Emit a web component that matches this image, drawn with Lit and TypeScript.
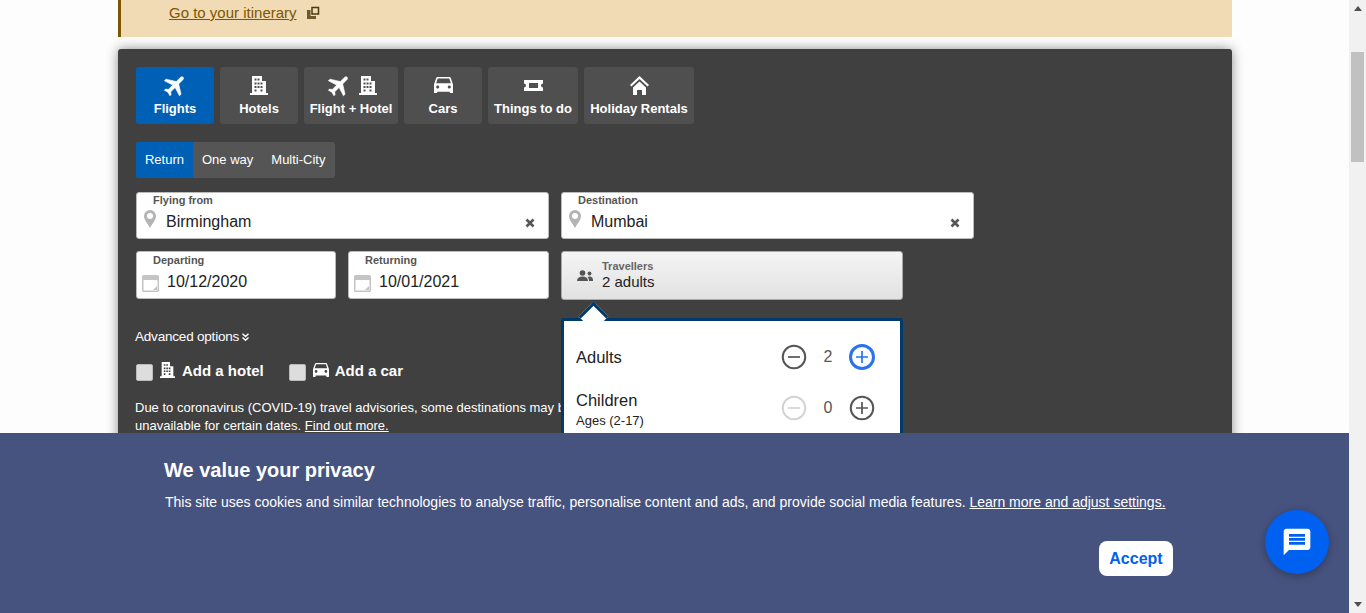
import { LitElement, html, css, svg } from 'lit';
import { customElement } from 'lit/decorators.js';

const plane = (size: number) => html`<svg width=${size} height=${size} viewBox="0 0 24 24" fill="currentColor" stroke="currentColor" stroke-width="0.5"><path transform="rotate(45 12 12)" d="M21 16v-2l-8-5V3.500c0-.83-.67-1.500-1.500-1.500S10 2.670 10 3.500V9l-8 5v2l8-2.500V19l-2 1.500V22l3.500-1 3.500 1v-1.500L13 19v-5.500l8 2.500z"/></svg>`;

const building = (w: number, h: number) => html`<svg width=${w} height=${h} viewBox="0 0 18 19" fill="currentColor"><path fill-rule="evenodd" d="M2 0h10v5h4v12h2v2H0v-2h2zM4.500 2.500v2h2v-2zm3 0v2h2v-2zM4.500 6.500v2h2v-2zm3 0v2h2v-2zm3 0v2h2v-2zM4.500 10v2h2v-2zm3 0v2h2v-2zm3 0v2h2v-2zM4.500 13.500v2h2v-2zm6 0v2h2v-2z"/></svg>`;

const car = (w: number) => html`<svg width=${w} height=${(w * 16) / 18} viewBox="3 5 18 16" fill="currentColor"><path d="M18.920 6.010C18.720 5.420 18.160 5 17.500 5h-11c-.66 0-1.210.42-1.420 1.010L3 12v8c0 .55.45 1 1 1h1c.55 0 1-.45 1-1v-1h12v1c0 .55.45 1 1 1h1c.55 0 1-.45 1-1v-8l-2.080-5.990zM6.500 16c-.83 0-1.500-.67-1.500-1.500S5.670 13 6.500 13s1.500.67 1.500 1.500S7.330 16 6.500 16zm11 0c-.83 0-1.500-.67-1.500-1.500s.67-1.500 1.500-1.500 1.500.67 1.500 1.500-.67 1.500-1.500 1.500zM5 11l1.500-4.500h11L19 11H5z"/></svg>`;

const ticket = html`<svg width="19" height="11" viewBox="0 0 19 11" fill="currentColor"><path fill-rule="evenodd" d="M0 0h19v3.500a2 2 0 0 0 0 4V11H0V7.500a2 2 0 0 0 0-4zM5 3v5h9V3z"/></svg>`;

const house = html`<svg width="19" height="19" viewBox="0 0 19 19" fill="currentColor"><path d="M9.500 0 19 9 17.600 10.500 9.500 3 1.400 10.500 0 9z"/><path d="M9.500 5.500 16 11.500V19H12V14H7V19H3V11.500z"/></svg>`;

const pin = html`<svg width="12" height="18" viewBox="0 0 12 18" fill="#b4b4b4"><path fill-rule="evenodd" d="M6 0a6 6 0 0 1 6 6c0 4-4 8-6 12C4 14 0 10 0 6a6 6 0 0 1 6-6zm0 3a3 3 0 1 0 0 6 3 3 0 0 0 0-6z"/></svg>`;

const clearIcon = html`<svg class="clear" width="10" height="10" viewBox="0 0 10 10"><path d="M1.500 1.500l7 7m0-7l-7 7" stroke="#555" stroke-width="2.600"/></svg>`;

const calendar = html`<svg width="17" height="17" viewBox="0 0 17 17"><rect width="17" height="17" rx="1.500" fill="#c4c4c4"/><rect x="1.500" y="5" width="14" height="10.500" fill="#fff"/><path d="M15 11v4h-4z" fill="#c4c4c4"/></svg>`;

const people = html`<svg width="16" height="11" viewBox="0 0 16 11" fill="#555"><circle cx="5.500" cy="3" r="2.800"/><path d="M0 11c0-3 2-4.500 5.500-4.500S11 8 11 11z"/><circle cx="12.500" cy="3.500" r="1.900"/><path d="M12 11c0-2-.500-3-1.500-4 3-1.500 5.500 0 5.500 3v1z"/></svg>`;

const stepper = (kind: 'minus' | 'plus', state: '' | 'off' | 'focus' = '') => html`<svg class="step ${state}" width="26" height="26" viewBox="0 0 26 26" fill="none" stroke="currentColor">
  <circle cx="13" cy="13" r=${state === 'focus' ? 11.500 : 11.250} stroke-width=${state === 'focus' ? 3 : 2}/>
  ${svg`<path d=${kind === 'plus' ? 'M7 13h12M13 7v12' : 'M7 13h12'} stroke-width="1.700"/>`}
</svg>`;

@customElement('app-root')
export class AppRoot extends LitElement {
  static styles = css`
    :host {
      display: flex;
      position: relative;
      height: 613px;
      overflow: hidden;
      background: #fdfdfd;
      font-family: 'Liberation Sans', Arial, sans-serif;
      color: #222;
    }
    .page {
      flex: 1;
      min-width: 0;
    }
    .wrap {
      width: 1114px;
      margin-left: 118px;
    }
    .banner {
      box-sizing: border-box;
      height: 37px;
      padding: 5px 0 0 48px;
      background: #f0dbb5;
      border-left: 3px solid #7f5600;
      display: flex;
      align-items: flex-start;
      gap: 10px;
      color: #7f5600;
      font-size: 15px;
      line-height: 16px;
    }
    .banner a {
      color: inherit;
      text-decoration: underline;
    }
    .banner svg {
      margin-top: 1px;
    }
    .panel {
      position: relative;
      margin-top: 12px;
      height: 560px;
      box-sizing: border-box;
      padding: 18px;
      background: #404040;
      border-radius: 3px;
      box-shadow: 0 0 12px rgba(0, 0, 0, 0.45);
      color: #fff;
    }
    .tabs {
      display: flex;
      gap: 6px;
    }
    .tab {
      box-sizing: border-box;
      height: 57px;
      padding-top: 4px;
      border-radius: 3px;
      background: #4f4f4f;
      display: flex;
      flex-direction: column;
      align-items: center;
      font-size: 13px;
      font-weight: 700;
      line-height: 15px;
      white-space: nowrap;
    }
    .tab.on {
      background: #0060b6;
    }
    .tab .ico {
      height: 28px;
      display: flex;
      align-items: center;
      gap: 6px;
      margin-bottom: 2px;
    }
    .trip {
      display: inline-flex;
      height: 36px;
      margin-top: 18px;
      border-radius: 3px;
      background: #555;
      font-size: 13px;
      overflow: hidden;
      padding-right: 1px;
    }
    .trip span {
      line-height: 35px;
      padding: 0 9px;
    }
    .trip .on {
      background: #0060b6;
      width: 57px;
      box-sizing: border-box;
      text-align: center;
      padding: 0;
    }
    .fields {
      display: flex;
      flex-direction: column;
      gap: 12px;
      margin-top: 14px;
    }
    .frow {
      display: flex;
      gap: 12px;
    }
    .field {
      box-sizing: border-box;
      height: 47px;
      background: #fff;
      border: 1px solid #bbb;
      border-radius: 3px;
      display: flex;
      flex-direction: column;
      padding: 1px 0 0 16px;
      color: #222;
    }
    .field.wide {
      width: 413px;
    }
    .field.tall {
      height: 48px;
      padding-top: 2px;
    }
    .field label {
      font-size: 11px;
      font-weight: 700;
      line-height: 13px;
      color: #555;
    }
    .line {
      display: flex;
      align-items: center;
      margin-left: -9px;
      margin-top: 2px;
      height: 26px;
      padding-right: 13px;
      font-size: 16px;
      gap: 10px;
    }
    .line.date {
      margin-left: -11px;
      gap: 8px;
    }
    .line svg:first-child {
      margin-top: -6px;
    }
    .line.date svg:first-child {
      margin-top: 2px;
    }
    .line .text {
      flex: 1;
    }
    .clear {
      margin-top: 1px;
    }
    .trav {
      box-sizing: border-box;
      width: 342px;
      height: 49px;
      border: 1px solid #aaa;
      border-radius: 3px;
      background: linear-gradient(#f4f4f4, #e2e2e2);
      display: flex;
      align-items: center;
      gap: 9px;
      padding-left: 15px;
      color: #222;
    }
    .trav label {
      display: block;
      font-size: 11px;
      font-weight: 700;
      line-height: 12px;
      color: #666;
    }
    .trav b {
      display: block;
      font-weight: 400;
      font-size: 15px;
      line-height: 19px;
    }
    .adv {
      margin: 29px 0 0 -1px;
      font-size: 13.500px;
      line-height: 16px;
      display: flex;
      align-items: center;
      gap: 3px;
      letter-spacing: -0.2px;
    }
    .addons {
      display: flex;
      margin-top: 15px;
      gap: 25px;
      font-size: 15px;
      font-weight: 700;
    }
    .addon {
      display: flex;
      align-items: center;
      gap: 7px;
      height: 20px;
    }
    .addon .word {
      margin-left: -1px;
    }
    .check {
      width: 17px;
      height: 17px;
      background: #ddd;
      border: 1px solid #bbb;
      border-radius: 2px;
      box-sizing: border-box;
      margin-top: 4px;
    }
    .note {
      margin: 19px 0 0 -1px;
      font-size: 13px;
      line-height: 18px;
    }
    .note a {
      color: inherit;
      text-decoration: underline;
    }
    .popup {
      position: absolute;
      left: 443px;
      top: 269px;
      width: 342px;
      height: 200px;
      box-sizing: border-box;
      background: #fff;
      border: 3px solid #003a6b;
      border-radius: 3px;
      color: #222;
      padding: 0 25px 0 12px;
    }
    .popup::before {
      content: '';
      position: absolute;
      left: 19px;
      top: -15px;
      width: 21px;
      height: 21px;
      background: #fff;
      border-top: 3px solid #003a6b;
      border-left: 3px solid #003a6b;
      transform: rotate(45deg);
      box-sizing: border-box;
    }
    .row {
      display: flex;
      align-items: center;
      justify-content: space-between;
      font-size: 16.500px;
    }
    .row.a {
      margin-top: 23px;
      height: 26px;
    }
    .row.c {
      margin-top: 19px;
      height: 40px;
    }
    .row small {
      display: block;
      font-size: 13px;
      line-height: 15px;
      margin-top: 2px;
    }
    .row .lbl {
      line-height: 21px;
    }
    .row.c .count {
      margin-bottom: 2px;
    }
    .count {
      display: flex;
      align-items: center;
      color: #555;
    }
    .count i {
      font-style: normal;
      width: 42px;
      text-align: center;
      font-size: 16px;
    }
    .step {
      color: #555;
    }
    .step.off {
      color: #d3d3d3;
    }
    .step.focus {
      color: #2a72f0;
    }
    .cookie {
      position: absolute;
      left: 0;
      right: 17px;
      top: 433px;
      bottom: 0;
      background: #47537f;
      color: #fff;
      padding: 25px 0 0 164px;
      box-sizing: border-box;
    }
    .cookie h2 {
      margin: 0;
      font-size: 20px;
      line-height: 24px;
      font-weight: 700;
    }
    .cookie p {
      margin: 12px 0 0 1px;
      font-size: 14px;
      line-height: 17px;
      white-space: nowrap;
    }
    .cookie p a {
      color: inherit;
      text-decoration: underline;
    }
    .accept {
      position: absolute;
      left: 1099px;
      top: 108px;
      width: 74px;
      height: 35px;
      border: 0;
      border-radius: 8px;
      background: #fff;
      color: #0060ef;
      font: 700 16px 'Liberation Sans', Arial, sans-serif;
      padding: 0;
    }
    .chat {
      position: absolute;
      left: 1265px;
      top: 510px;
      width: 64px;
      height: 64px;
      border-radius: 50%;
      background: #0060ef;
      box-shadow: 0 2px 8px rgba(0, 0, 0, 0.3);
      display: flex;
      align-items: center;
      justify-content: center;
    }
    .scrollbar {
      position: relative;
      flex: 0 0 17px;
      background: #f1f1f1;
    }
    .thumb {
      position: absolute;
      left: 2px;
      top: 52px;
      height: 110px;
      width: 13px;
      background: #c1c1c1;
    }
    .arr {
      position: absolute;
      left: 5px;
      width: 0;
      height: 0;
      border-left: 4px solid transparent;
      border-right: 4px solid transparent;
    }
    .arr.up {
      top: 6px;
      border-bottom: 5px solid #505050;
    }
    .arr.down {
      bottom: 6px;
      border-top: 5px solid #505050;
    }
  `;

  private tab(width: number, label: string, icon: unknown, on = false) {
    return html`<div class="tab ${on ? 'on' : ''}" style="width:${width}px"><span class="ico">${icon}</span>${label}</div>`;
  }

  render() {
    return html`
      <div class="page">
        <div class="wrap">
          <div class="banner">
            <a>Go to your itinerary</a>
            <svg width="13" height="13" viewBox="0 0 13 13" fill="none"><rect x="5" y="1.500" width="6.500" height="6.500" stroke="#4a3a10" stroke-width="1.500"/><path d="M0 4h3.500v6H9v3H0z" fill="#6b5a2a"/></svg>
          </div>
          <div class="panel">
            <div class="tabs">
              ${this.tab(78, 'Flights', plane(27), true)}
              ${this.tab(78, 'Hotels', building(18, 19))}
              ${this.tab(94, 'Flight + Hotel', html`${plane(27)}${building(18, 19)}`)}
              ${this.tab(78, 'Cars', car(19))}
              ${this.tab(90, 'Things to do', ticket)}
              ${this.tab(110, 'Holiday Rentals', house)}
            </div>
            <div class="trip"><span class="on">Return</span><span>One way</span><span>Multi-City</span></div>
            <div class="fields">
              <div class="frow">
                <div class="field wide">
                  <label>Flying from</label>
                  <div class="line">${pin}<span class="text">Birmingham</span>${clearIcon}</div>
                </div>
                <div class="field wide">
                  <label>Destination</label>
                  <div class="line">${pin}<span class="text">Mumbai</span>${clearIcon}</div>
                </div>
              </div>
              <div class="frow">
                <div class="field tall" style="width:200px">
                  <label>Departing</label>
                  <div class="line date">${calendar}<span class="text">10/12/2020</span></div>
                </div>
                <div class="field tall" style="width:201px">
                  <label>Returning</label>
                  <div class="line date">${calendar}<span class="text">10/01/2021</span></div>
                </div>
                <div class="trav">
                  ${people}
                  <div><label>Travellers</label><b>2 adults</b></div>
                </div>
              </div>
            </div>
            <div class="adv">Advanced options
              <svg width="7" height="8" viewBox="0 0 7 8" fill="none" stroke="#fff" stroke-width="1.500"><path d="M.5.800 3.500 3.500 6.500.800M.5 4.500 3.500 7.200 6.500 4.500"/></svg>
            </div>
            <div class="addons">
              <div class="addon"><span class="check"></span>${building(15, 16)}<span>Add a hotel</span></div>
              <div class="addon"><span class="check"></span>${car(16)}<span class="word">Add a car</span></div>
            </div>
            <p class="note">Due to coronavirus (COVID-19) travel advisories, some destinations may be<br />unavailable for certain dates. <a>Find out more.</a></p>
            <div class="popup">
              <div class="row a">
                <span>Adults</span>
                <div class="count">${stepper('minus')}<i>2</i>${stepper('plus', 'focus')}</div>
              </div>
              <div class="row c">
                <span class="lbl">Children<small>Ages (2-17)</small></span>
                <div class="count">${stepper('minus', 'off')}<i>0</i>${stepper('plus')}</div>
              </div>
            </div>
          </div>
        </div>
      </div>
      <div class="scrollbar">
        <span class="arr up"></span>
        <div class="thumb"></div>
        <span class="arr down"></span>
      </div>
      <div class="cookie">
        <h2>We value your privacy</h2>
        <p>This site uses cookies and similar technologies to analyse traffic, personalise content and ads, and provide social media features. <a>Learn more and adjust settings.</a></p>
        <button class="accept">Accept</button>
      </div>
      <div class="chat">
        <svg width="32" height="32" viewBox="0 0 24 24" fill="#fff"><path d="M20 2H4c-1.100 0-1.990.9-1.990 2L2 22l4-4h14c1.100 0 2-.9 2-2V4c0-1.100-.9-2-2-2zm-2 12H6v-2h12v2zm0-3H6V9h12v2zm0-3H6V6h12v2z"/></svg>
      </div>
    `;
  }
}
